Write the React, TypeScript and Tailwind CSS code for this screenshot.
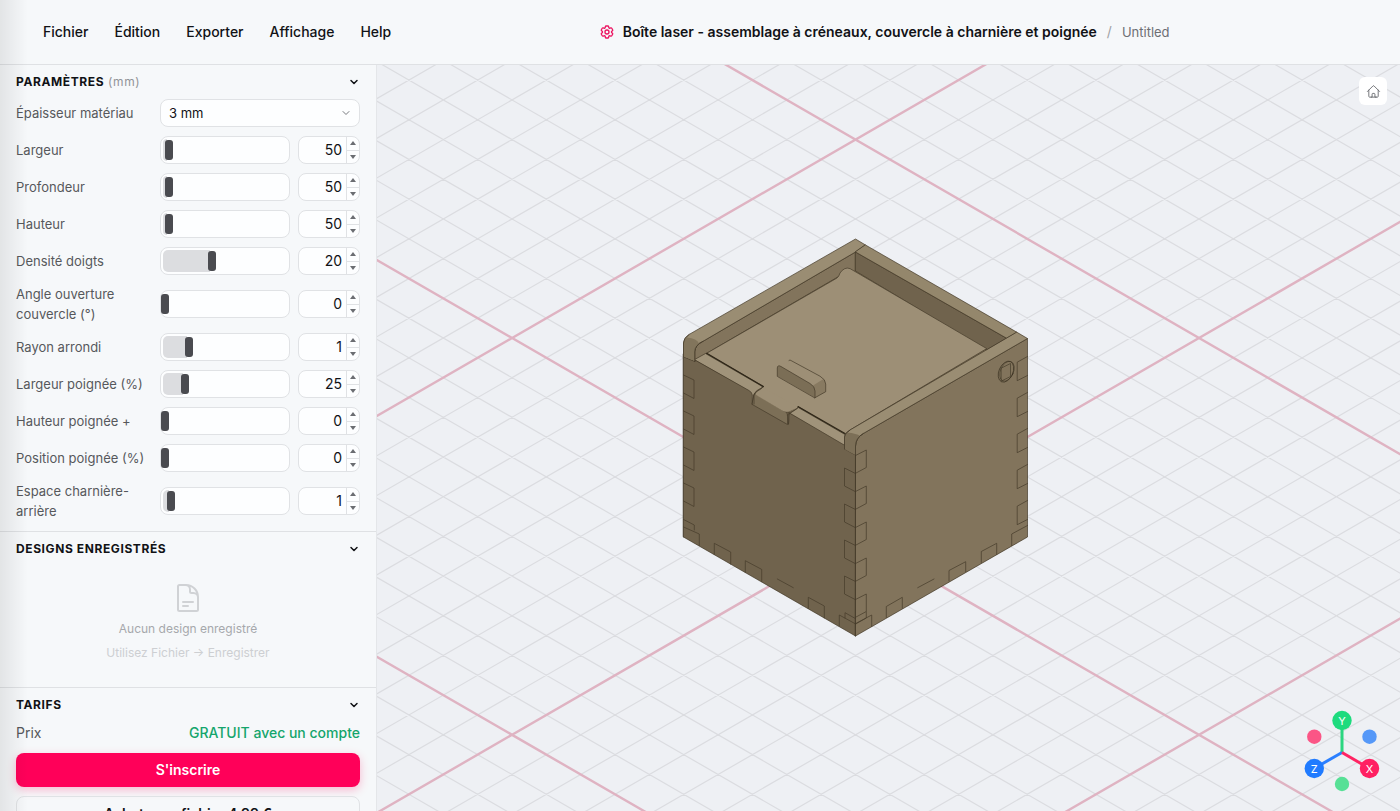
import { useState } from 'react';
import type { ReactNode } from 'react';
import { ChevronDown } from 'lucide-react';
import { HiOutlineCog6Tooth, HiOutlineDocumentText, HiOutlineHome } from 'react-icons/hi2';

interface Param {
  id: string;
  label: string;
  value: number;
  min: number;
  max: number;
}

const MENU = ['Fichier', 'Édition', 'Exporter', 'Affichage', 'Help'];

const PARAMS: Param[] = [
  { id: 'width', label: 'Largeur', value: 50, min: 30, max: 600 },
  { id: 'depth', label: 'Profondeur', value: 50, min: 30, max: 600 },
  { id: 'height', label: 'Hauteur', value: 50, min: 30, max: 600 },
  { id: 'fingers', label: 'Densité doigts', value: 20, min: 1, max: 50 },
  { id: 'angle', label: 'Angle ouverture couvercle (°)', value: 0, min: 0, max: 110 },
  { id: 'radius', label: 'Rayon arrondi', value: 1, min: 0, max: 5 },
  { id: 'handleWidth', label: 'Largeur poignée (%)', value: 25, min: 10, max: 100 },
  { id: 'handleHeight', label: 'Hauteur poignée +', value: 0, min: 0, max: 20 },
  { id: 'handlePos', label: 'Position poignée (%)', value: 0, min: 0, max: 100 },
  { id: 'hinge', label: 'Espace charnière-arrière', value: 1, min: 0, max: 20 },
];

const field = 'rounded-lg border border-[#e0e2e5] bg-[#fdfeff]';

function ParamRow({ param }: { param: Param }) {
  const [value, setValue] = useState(param.value);
  const ratio = (value - param.min) / (param.max - param.min);
  const update = (v: number) => setValue(Math.min(param.max, Math.max(param.min, v)));

  return (
    <div className="grid grid-cols-[136px_1fr_62px] items-center gap-x-2">
      <label htmlFor={param.id} className="text-[13px] leading-5 text-[#56585c]">
        {param.label}
      </label>
      <div className={`relative h-7 ${field}`}>
        <div
          className="absolute inset-y-[2px] left-[2px] rounded-l-[5px] bg-[#dcdde0]"
          style={{ width: `calc((100% - 8px) * ${ratio})` }}
        />
        <input
          id={param.id}
          type="range"
          min={param.min}
          max={param.max}
          value={value}
          onChange={(e) => update(Number(e.target.value))}
          className="relative block h-full w-full cursor-pointer appearance-none bg-transparent [&::-webkit-slider-thumb]:h-5 [&::-webkit-slider-thumb]:w-2 [&::-webkit-slider-thumb]:appearance-none [&::-webkit-slider-thumb]:rounded-[3px] [&::-webkit-slider-thumb]:bg-[#4a4b50]"
        />
      </div>
      <div className={`flex h-7 overflow-hidden ${field}`}>
        <input
          type="number"
          aria-label={param.label}
          value={value}
          onChange={(e) => update(Number(e.target.value))}
          className="w-full min-w-0 flex-1 appearance-none bg-transparent pr-1 text-right text-sm text-[#111216] outline-none [&::-webkit-inner-spin-button]:appearance-none"
        />
        <div className="flex w-[13px] shrink-0 flex-col divide-y divide-[#e0e2e5] border-l border-[#e0e2e5]">
          <button aria-label="Augmenter" onClick={() => update(value + 1)} className="flex flex-1 items-center justify-center">
            <svg viewBox="0 0 6 4" className="h-1 w-1.5 fill-[#6b6d72]"><path d="M3 0 6 4H0z" /></svg>
          </button>
          <button aria-label="Diminuer" onClick={() => update(value - 1)} className="flex flex-1 items-center justify-center">
            <svg viewBox="0 0 6 4" className="h-1 w-1.5 fill-[#6b6d72]"><path d="M0 0h6L3 4z" /></svg>
          </button>
        </div>
      </div>
    </div>
  );
}

function Section({ title, unit, children }: { title: string; unit?: string; children: ReactNode }) {
  const [open, setOpen] = useState(true);
  return (
    <section className="border-b border-[#dfe1e4] px-4">
      <h2>
        <button onClick={() => setOpen(!open)} className="flex h-[34px] w-full items-center justify-between">
          <span className="text-xs font-bold tracking-wider text-[#111216]">
            {title}
            {unit && <span className="font-normal text-[#929498]"> {unit}</span>}
          </span>
          <ChevronDown size={12} strokeWidth={3} className={open ? '' : '-rotate-90'} />
        </button>
      </h2>
      {open && children}
    </section>
  );
}

// Finger joints: each one is an open outline running down a box edge, every 36 units
const JOINTS = [
  { d: 'M683.5 375l10.5 5v18.5l-10.5-5.5', count: 4 },
  { d: 'M855.5 473.5l-11-5.5v18l11 5.7', count: 4 },
  { d: 'M855.5 455.5l10.8-5.5v17.5l-10.8 5.8', count: 5 },
  { d: 'M1027.5 356.5l-10.3 5.7v18.5l10.3-5.2', count: 5 },
];

const BASE_JOINTS =
  'M683.5 519.5l10.8 5.5v5M683.5 527l15.8 7v11.5M714.3 554.5v-11.2l16.4 8.7v12.2M745.3 572.5v-11.8l16.4 8.7v12.3M777.3 579l16 8.7M808.3 608.5v-11.2l16 8.7v12M839.3 626v-11l16.4 9M845 618v-5.3l10.7 6' +
  'M1011.7 545.5v-11.5l15.8-8.5M981.3 562.5v-11l15.4-8.2v11.2M949 581v-10.5l16.7-8.8v10M917.7 587.7l16.3-8.7M886.3 617.5v-11l16-9.2v11M855.7 623.5l16-8.5v11.5M866.3 612v6l-10.6 6';

function BoxModel() {
  return (
    <g stroke="#453b2a" strokeWidth={0.7} strokeLinejoin="round" strokeLinecap="round">
      <path d="M684 341L855.5 240L1027 338.5V537L855.5 635.5L684 537Z" fill="#887a61" stroke="none" />
      {/* outer faces */}
      <path d="M683.5 354L694.7 359.5L855.5 450V636L683.5 537Z" fill="#70634d" />
      <path d="M855.5 446Q856 437.5 863.3 433.5L1027.5 338.5V537L855.5 636Z" fill="#82745c" />
      {/* inner walls */}
      <path d="M694.7 361V351Q695.5 345 703 341.3L855.5 252V271L838.3 276.7L706.7 353.3Z" fill="#82745c" />
      <path d="M855.5 252L1006.7 338.3L986.7 350L855.5 271Z" fill="#70634d" />
      {/* lid */}
      <path
        d="M706.7 353.3L837 278Q839 276.5 840 273Q844.5 266.5 850 268.6L986.7 348.6L850 430Q845.5 433 845 434.5L798.3 406.7L788.5 411.7L785 412L755 394L763.3 386.7Z"
        fill="#9d8f76"
      />
      {/* front panel top edge */}
      <path d="M694.7 359.5L705.5 353.5L763.3 387Q756 390 754 394L752.3 404.3V395Q752 392 749 390.5Z" fill="#a0937a" />
      <path d="M788.5 424V414.5L798.3 407.5L845 434.5V445.5L790 413.3Z" fill="#a0937a" />
      <path d="M754 394.5Q754.5 393 757 394.5L783 410.5Q788 412 787.5 415V424.5L752.3 404.5Z" fill="#7c6f57" />
      <path d="M755 394L758 391L763.3 387.5L798 407.5L789 411.5Q785 412.5 782 410.5L757 395.5Z" fill="#9d8f76" stroke="none" />
      <path d="M754 404V395Q755 391 760 389.5Q763 388 762.5 386.5M787.5 415Q788.5 412.5 793 411Q797.5 409.5 798.3 406.7" fill="none" />
      <path d="M706.7 353.3L763.3 386.5M798.3 406.7L845 433.5" fill="none" stroke="#2e2618" strokeWidth={1.2} />
      {/* handle */}
      <path d="M780 365.5L790 360L820 375.5Q825.7 378.5 825.7 384V391.7L815 397.7L777.3 376V367.5Z" fill="#9d8f76" stroke="none" />
      <path d="M813 385.5L823.5 379Q825.7 381 825.7 384V391.7L815 397.7Z" fill="#887a61" stroke="none" />
      <path d="M777.3 376V368Q777.5 364.5 781 366.5L810 383.5Q815 386.5 815 391V397.7Z" fill="#7b6e56" />
      <path d="M789 360.5L790 360L820 376.2Q825.7 379.5 825.7 384V391.7L815 397.7" fill="none" />
      {/* rims of the side panels */}
      <path d="M683.5 356.5V343Q683.5 338 689 334.5L855.5 239L865.5 245L855.5 252L703 341.3Q694.7 345 694.7 352V361Z" fill="#9a8d73" />
      <path d="M683.5 356.5V343Q684 339 687 337.5Q697 338.5 699 343.5Q694.7 347 694.7 352V361Z" fill="#82755c" stroke="none" />
      <path d="M865.5 245L1017 332.3L1006.7 338.3L855.5 252Z" fill="#94876c" />
      <path d="M1017 332.3L1027.5 338.5L863.3 433.5Q855.5 438 855.5 446V455L844.5 449V437Q845 433 850 430Z" fill="#9a8d73" />
      <path d="M844.5 449V437Q845 434 847 432.5Q857 433.5 860 436Q855.5 440 855.5 446V455Z" fill="#7c6f57" stroke="none" />
      <path d="M683.5 537V343Q683.5 338 689 334.5M694.7 361V352Q694.7 345 703 341.3M844.5 449V437Q845 433 850 430M855.5 636V446Q855.5 438 863.3 433.5" fill="none" />
      {/* joints */}
      <g fill="none">
        {JOINTS.map((joint) =>
          Array.from({ length: joint.count }, (_, i) => (
            <path key={`${joint.d}-${i}`} d={joint.d} transform={`translate(0 ${i * 36})`} />
          )),
        )}
        <path d={BASE_JOINTS} />
      </g>
      {/* hinge hole */}
      <g fill="none" stroke="#3d3424">
        <ellipse cx="1006" cy="371.7" rx="7" ry="11" transform="rotate(24 1006 371.7)" />
        <ellipse cx="1007" cy="371.2" rx="6.5" ry="10.5" strokeWidth={0.5} transform="rotate(24 1007 371.2)" />
        <path d="M1001.5 368l9-4.5v13l-9 4.5z" strokeWidth={0.6} />
      </g>
    </g>
  );
}

const STEP_X = 343.5;
const STEP_Y = 198.4;
// Both line families cross on the vertical axis of the box, a fifth of STEP_Y apart
const OFFSETS = Array.from({ length: 61 }, (_, i) => i - 30);

function Scene() {
  const gridLine = (offset: number, dir: number) => {
    const y = 536.4 + (offset * STEP_Y) / 5;
    return `M${855.5 - STEP_X * 4} ${y - dir * STEP_Y * 4}L${855.5 + STEP_X * 4} ${y + dir * STEP_Y * 4}`;
  };
  const minor = OFFSETS.filter((o) => o % 10 !== 0);
  const major = OFFSETS.filter((o) => o % 10 === 0);

  return (
    <svg viewBox="377 65 1023 746" preserveAspectRatio="xMidYMid slice" className="absolute inset-0 h-full w-full" aria-hidden="true">
      <g fill="none">
        <path d={minor.map((o) => gridLine(o, 1) + gridLine(o, -1)).join('')} stroke="#dbdce0" strokeWidth={1.2} />
        <path d={major.map((o) => gridLine(o, 1) + gridLine(o, -1)).join('')} stroke="#dfb3c2" strokeWidth={2.4} />
      </g>
      <BoxModel />
    </svg>
  );
}

function AxisGizmo() {
  return (
    <svg viewBox="0 0 80 88" className="absolute right-[18px] bottom-[16px] h-[88px] w-20 font-['Inter',sans-serif]" aria-hidden="true">
      <g strokeWidth={3}>
        <path d="M40 45.5V14" stroke="#2bd680" />
        <path d="M40 45.5L12 61.5" stroke="#2b7fff" />
        <path d="M40 45.5L67.5 61.5" stroke="#ff2463" />
      </g>
      <circle cx="12.3" cy="29.7" r="7.2" fill="#fb5586" />
      <circle cx="67.5" cy="29.7" r="7.2" fill="#5598f8" />
      <circle cx="40" cy="77" r="7.2" fill="#57e096" />
      <circle cx="40" cy="13.5" r="9.7" fill="#1edb7e" />
      <circle cx="12.3" cy="61.5" r="9.7" fill="#207bff" />
      <circle cx="67.5" cy="61.5" r="9.7" fill="#ff2062" />
      <g fill="#fff" fontSize={11} textAnchor="middle">
        <text x="40" y="18">Y</text>
        <text x="12.3" y="66">Z</text>
        <text x="67.5" y="66">X</text>
      </g>
    </svg>
  );
}

export default function App() {
  return (
    <div className="relative flex h-screen flex-col overflow-hidden bg-[#f6f8fa] font-['Inter',sans-serif] text-sm text-[#111216]">
      <header className="flex h-[65px] shrink-0 items-center border-b border-[#dfe1e4]">
        <nav className="flex shrink-0 items-center pl-[30px]">
          {MENU.map((item) => (
            <button key={item} className="px-[13px] py-1 font-medium">{item}</button>
          ))}
        </nav>
        <div className="flex min-w-0 flex-1 items-center justify-center gap-2 pr-9">
          <HiOutlineCog6Tooth size={16} strokeWidth={2} className="shrink-0 text-[#ec1561]" />
          <h1 className="truncate font-semibold">
            Boîte laser - assemblage à créneaux, couvercle à charnière et poignée
          </h1>
          <span className="px-0.5 text-[#a0a2a6]">/</span>
          <span className="text-[13px] text-[#6d6f74]">Untitled</span>
        </div>
      </header>

      <div className="flex min-h-0 flex-1">
        <aside className="w-[377px] shrink-0 overflow-x-hidden overflow-y-auto border-r border-[#e4e6e9] [scrollbar-width:none]">
          <Section title="PARAMÈTRES" unit="(mm)">
            <div className="flex flex-col gap-[9px] pb-[10px]">
              <div className="grid grid-cols-[136px_1fr] items-center gap-x-2">
                <label htmlFor="thickness" className="text-[13px] leading-5 text-[#56585c]">Épaisseur matériau</label>
                <div className="relative">
                  <select id="thickness" className={`block h-7 w-full appearance-none pr-6 pl-2 text-[13px] ${field}`}>
                    <option>3 mm</option>
                    <option>4 mm</option>
                    <option>5 mm</option>
                  </select>
                  <ChevronDown size={12} className="pointer-events-none absolute top-2 right-2 text-[#77797e]" />
                </div>
              </div>
              {PARAMS.map((param) => (
                <ParamRow key={param.id} param={param} />
              ))}
            </div>
          </Section>

          <Section title="DESIGNS ENREGISTRÉS">
            <div className="flex flex-col items-center pt-4 pb-6 text-xs">
              <HiOutlineDocumentText size={32} className="text-[#d0d2d5]" />
              <p className="mt-[5px] leading-5 text-[#a6a8ac]">Aucun design enregistré</p>
              <p className="mt-1 leading-5 text-[#cdcfd2]">Utilisez Fichier → Enregistrer</p>
            </div>
          </Section>

          <Section title="TARIFS">
            <div className="flex flex-col gap-[9px] pb-4">
              <div className="flex items-center justify-between leading-[22px]">
                <span className="text-[#56585c]">Prix</span>
                <span className="font-medium text-[#14a56c]">GRATUIT avec un compte</span>
              </div>
              <button className="h-[34px] rounded-lg bg-[#ff0059] font-semibold text-white shadow-[0_3px_10px_rgba(255,0,89,0.25)]">
                S'inscrire
              </button>
              <button className="h-9 rounded-lg border border-[#e0e2e5] font-semibold">
                Acheter ce fichier 4,99 €
              </button>
            </div>
          </Section>
        </aside>

        <main className="relative min-w-0 flex-1 overflow-hidden bg-[#eef0f4]">
          <Scene />
          <button aria-label="Vue initiale" className="absolute top-3 right-[13px] flex size-7 items-center justify-center rounded-md bg-white text-[#6d6f74]">
            <HiOutlineHome size={15} />
          </button>
          <AxisGizmo />
        </main>
      </div>

      <div className="pointer-events-none absolute inset-y-0 left-0 w-7 bg-linear-to-r from-black/8 to-transparent" />
    </div>
  );
}
